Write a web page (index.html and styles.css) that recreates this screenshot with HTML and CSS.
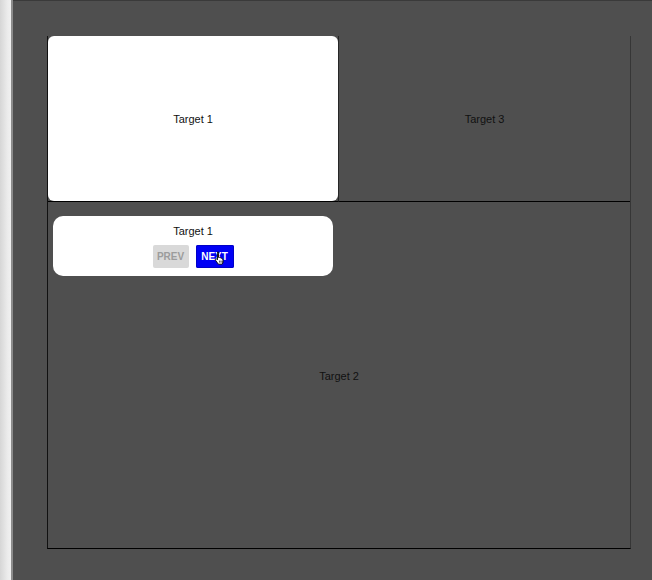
FILE: index.html
```html
<!DOCTYPE html>
<html lang="en">
<head>
    <meta charset="UTF-8">
    <meta name="viewport" content="width=device-width, initial-scale=1.0">
    <title>Tour</title>
    <link rel="stylesheet" href="styles.css">
</head>
<body>
    <div class="edge"></div>
    <div class="page">
        <div class="board">
            <div class="cell cell-one">
                <div class="spot">Target 1</div>
            </div>
            <div class="cell cell-three">Target 3</div>
            <div class="cell cell-two">
                <span class="label-two">Target 2</span>

                <!-- Tour tooltip -->
                <div class="tip">
                    <p class="tip-title">Target 1</p>
                    <div class="tip-actions">
                        <button class="btn btn-prev">PREV</button>
                        <button class="btn btn-next">NEXT
                            <svg class="cursor" width="12" height="14" viewBox="0 0 12 14">
                                <path d="M3.5 1.2c.6 0 1 .4 1 1v4.3l.3-.1c.5-.2 1 0 1.2.5l.2-.1c.5-.2 1 0 1.2.5.5-.2 1 .1 1.2.6l.4 1.3c.3 1 .2 2-.3 2.9l-.6 1.1H4.4L1.6 9.4c-.4-.5-.3-1.1.1-1.4.4-.3.9-.2 1.2.1l.6.7V2.2c0-.6.4-1 1-1z" fill="#fff" stroke="#000" stroke-width="0.9" stroke-linejoin="round"/>
                                <path d="M5.6 9.6v2M7 9.6v2M8.3 9.8v1.8" stroke="#000" stroke-width="0.7"/>
                            </svg>
                        </button>
                    </div>
                </div>
            </div>
        </div>
    </div>
</body>
</html>
```

FILE: styles.css
```css
html, body {
    height: 100%;
}
body {
    margin: 0;
    display: flex;
    background-color: #4f4f4f;
    font-family: "Liberation Sans", Arial, sans-serif;
    font-size: 11px;
    color: #111;
    overflow: hidden;
}
.edge {
    width: 11px;
    flex: none;
    background: linear-gradient(to right, #d6d6d6, #ececec 70%, #f0f0f0);
    border-right: 2px solid #8c8c8c;
}
.page {
    flex: 1;
    border-top: 1px solid #3a3a3a;
    padding: 35px 0 0 34px;
}
.board {
    width: 582px;
    display: grid;
    grid-template-columns: 291px 1fr;
    grid-template-rows: 166px 346px;
    border-left: 1px solid #111;
    border-right: 1px solid #363636;
    border-bottom: 1px solid #000;
}
.cell {
    display: flex;
    justify-content: center;
    align-items: center;
}
.cell-one {
    border-bottom: 1px solid #000;
    border-right: 1px solid #262626;
}
.spot {
    width: 100%;
    height: 100%;
    background-color: #fff;
    border-radius: 6px;
    display: flex;
    justify-content: center;
    align-items: center;
}
.cell-three {
    border-bottom: 1px solid #000;
}
.cell-two {
    grid-column: 1 / 3;
    position: relative;
}
.label-two {
    margin-top: 2px;
}
.tip {
    position: absolute;
    left: 5px;
    top: 14px;
    width: 280px;
    height: 60px;
    box-sizing: border-box;
    padding-top: 8px;
    background-color: #fff;
    border-radius: 10px;
    text-align: center;
}
.tip-title {
    margin: 0;
    line-height: 14px;
}
.tip-actions {
    margin-top: 7px;
    display: flex;
    justify-content: center;
    gap: 7px;
}
.btn {
    height: 23px;
    padding: 0;
    border: none;
    border-radius: 2px;
    font-family: "Liberation Sans", Arial, sans-serif;
    font-size: 10px;
    font-weight: bold;
    position: relative;
}
.btn-prev {
    width: 36px;
    background-color: #d9d9d9;
    color: #9c9c9c;
}
.btn-next {
    width: 38px;
    background-color: #0000f5;
    color: #fff;
    box-shadow: inset 0 0 0 1px #0000c8;
}
.cursor {
    position: absolute;
    left: 18px;
    top: 6px;
}
```
